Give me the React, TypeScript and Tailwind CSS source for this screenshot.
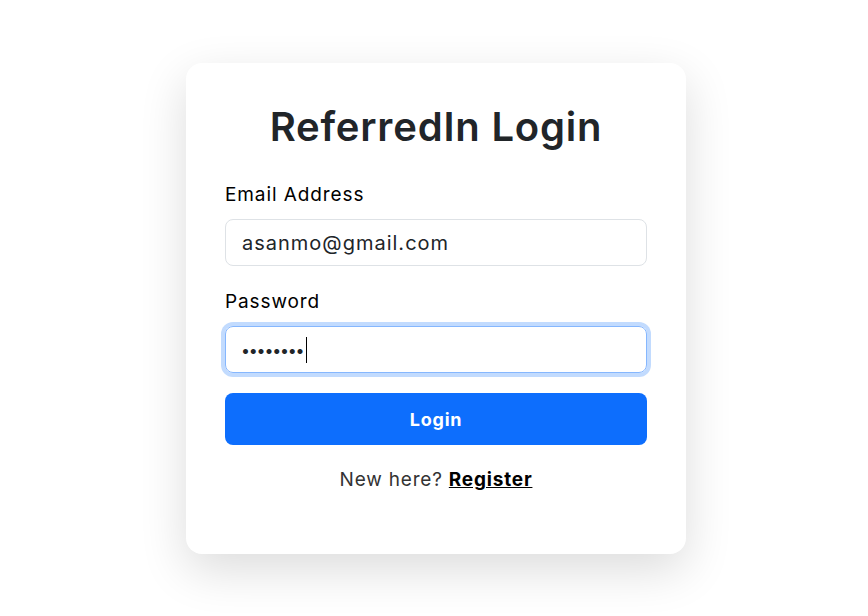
import { useState } from "react";

export default function App() {
  const [email, setEmail] = useState("asanmo@gmail.com");
  const [password, setPassword] = useState("12345678");

  return (
    <div className="flex min-h-screen justify-center bg-white pt-[63px] pl-[4px] font-['Inter','Noto_Sans',sans-serif] text-[#212529]">
      <div className="h-fit w-[500px] rounded-[16px] bg-white px-[39px] pt-[40px] pb-[61px] shadow-[0_16px_48px_rgba(0,0,0,0.14)]">
        <h1 className="text-center text-[40px] font-semibold leading-[48px] tracking-[0.8px] text-[#212529]">
          ReferredIn Login
        </h1>

        <form className="mt-[30px] flex flex-col" onSubmit={(e) => e.preventDefault()}>
          <label className="mb-[11px] text-[19px] leading-[27px] tracking-[0.9px] text-black">Email Address</label>
          <input
            type="email"
            value={email}
            onChange={(e) => setEmail(e.target.value)}
            className="h-[47px] w-full rounded-[8px] border border-[#dee2e6] px-[16px] text-[20px] tracking-[1px] text-[#212529] outline-none"
          />

          <label className="mt-[22px] mb-[11px] text-[19px] leading-[27px] tracking-[0.9px] text-black">Password</label>
          <div className="relative">
            <input
              type="password"
              value={password}
              onChange={(e) => setPassword(e.target.value)}
              className="h-[47px] w-full rounded-[8px] border border-[#86b7fe] px-[15px] text-[16px] tracking-[-1.2px] text-[#212529] caret-black outline-none shadow-[0_0_0_4px_rgba(13,110,253,0.25)]"
            />
            {/* text cursor */}
            <span className="pointer-events-none absolute left-[81px] top-[11px] h-[26px] w-px bg-black" />
          </div>

          <button
            type="submit"
            className="mt-[20px] h-[52px] w-full rounded-[8px] bg-[#0d6efd] text-[18px] font-bold tracking-[0.8px] text-white"
          >
            Login
          </button>
        </form>

        <p className="mt-[21px] text-center text-[19px] leading-[27px] tracking-[0.8px] text-[#333]">
          New here?{" "}
          <a href="#" className="font-bold text-black underline">
            Register
          </a>
        </p>
      </div>
    </div>
  );
}
